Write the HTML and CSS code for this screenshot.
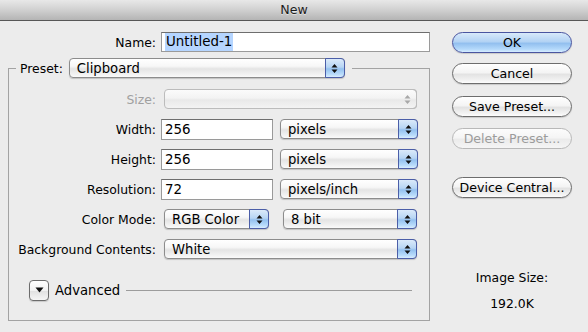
FILE: index.html
```html
<!DOCTYPE html>
<html>
<head>
    <meta charset="utf-8">
    <title>New</title>
    <link rel="stylesheet" href="styles.css">
</head>
<body>
<div class="dialog">

    <div class="titlebar">New</div>

    <div class="dialog-body">

        <div class="form-column">

            <div class="name-row">
                <label class="name-label" for="nameInput">Name:</label>
                <div class="text-field name-field" id="nameInput"><span class="selected-text">Untitled-1</span></div>
            </div>

            <fieldset class="preset-box">
                <legend class="preset-legend">
                    <span class="preset-label">Preset:</span>
                    <div class="popup preset-popup">
                        <span class="popup-text">Clipboard</span>
                        <span class="popup-arrows"><svg width="7" height="11" viewBox="0 0 7 11"><path d="M3.5 1L6.5 4.5H0.5z M0.5 6.5H6.5L3.5 10z"/></svg></span>
                    </div>
                </legend>

                <div class="row">
                    <span class="label label-disabled">Size:</span>
                    <div class="popup popup-disabled size-popup">
                        <span class="popup-text"></span>
                        <span class="popup-arrows"><svg width="7" height="11" viewBox="0 0 7 11"><path d="M3.5 1L6.5 4.5H0.5z M0.5 6.5H6.5L3.5 10z"/></svg></span>
                    </div>
                </div>

                <div class="row">
                    <span class="label">Width:</span>
                    <div class="text-field number-field">256</div>
                    <div class="popup unit-popup">
                        <span class="popup-text">pixels</span>
                        <span class="popup-arrows"><svg width="7" height="11" viewBox="0 0 7 11"><path d="M3.5 1L6.5 4.5H0.5z M0.5 6.5H6.5L3.5 10z"/></svg></span>
                    </div>
                </div>

                <div class="row">
                    <span class="label">Height:</span>
                    <div class="text-field number-field">256</div>
                    <div class="popup unit-popup">
                        <span class="popup-text">pixels</span>
                        <span class="popup-arrows"><svg width="7" height="11" viewBox="0 0 7 11"><path d="M3.5 1L6.5 4.5H0.5z M0.5 6.5H6.5L3.5 10z"/></svg></span>
                    </div>
                </div>

                <div class="row">
                    <span class="label">Resolution:</span>
                    <div class="text-field number-field">72</div>
                    <div class="popup unit-popup">
                        <span class="popup-text">pixels/inch</span>
                        <span class="popup-arrows"><svg width="7" height="11" viewBox="0 0 7 11"><path d="M3.5 1L6.5 4.5H0.5z M0.5 6.5H6.5L3.5 10z"/></svg></span>
                    </div>
                </div>

                <div class="row">
                    <span class="label">Color Mode:</span>
                    <div class="popup mode-popup">
                        <span class="popup-text">RGB Color</span>
                        <span class="popup-arrows"><svg width="7" height="11" viewBox="0 0 7 11"><path d="M3.5 1L6.5 4.5H0.5z M0.5 6.5H6.5L3.5 10z"/></svg></span>
                    </div>
                    <div class="popup bits-popup">
                        <span class="popup-text">8 bit</span>
                        <span class="popup-arrows"><svg width="7" height="11" viewBox="0 0 7 11"><path d="M3.5 1L6.5 4.5H0.5z M0.5 6.5H6.5L3.5 10z"/></svg></span>
                    </div>
                </div>

                <div class="row">
                    <span class="label">Background Contents:</span>
                    <div class="popup wide-popup">
                        <span class="popup-text">White</span>
                        <span class="popup-arrows"><svg width="7" height="11" viewBox="0 0 7 11"><path d="M3.5 1L6.5 4.5H0.5z M0.5 6.5H6.5L3.5 10z"/></svg></span>
                    </div>
                </div>

                <div class="advanced-row">
                    <span class="disclosure"><svg width="9" height="6" viewBox="0 0 9 6"><path d="M0.5 0.5H8.5L4.5 5.5z"/></svg></span>
                    <span class="advanced-label">Advanced</span>
                    <span class="advanced-line"></span>
                </div>
            </fieldset>

        </div>

        <div class="button-column">
            <button class="push-button default-button">OK</button>
            <button class="push-button cancel-button">Cancel</button>
            <button class="push-button save-button">Save Preset...</button>
            <button class="push-button delete-button" disabled>Delete Preset...</button>
            <button class="push-button device-button">Device Central...</button>

            <div class="image-size-title">Image Size:</div>
            <div class="image-size-value">192.0K</div>
        </div>

    </div>

</div>
</body>
</html>
```

FILE: styles.css
```css
* {
    box-sizing: border-box;
}

body {
    margin: 0;
    background: #ececec;
    font-family: "DejaVu Sans", Verdana, sans-serif;
    font-size: 12.4px;
    color: #000;
}

.dialog {
    width: 588px;
    height: 332px;
    overflow: hidden;
    background: #ececec;
}

.titlebar {
    height: 21px;
    line-height: 20px;
    text-align: center;
    font-size: 12.6px;
    color: #1c1c1c;
    text-shadow: 0 1px 0 rgba(255, 255, 255, 0.5);
    background: linear-gradient(#e8e8e8, #d0d0d0 50%, #b4b4b4);
    border-bottom: 1px solid #575757;
}

.dialog-body {
    display: flex;
}

/* left side */

.form-column {
    width: 430px;
    padding-left: 8px;
}

.name-row {
    display: flex;
    align-items: center;
    margin-top: 11px;
    height: 20px;
}

.name-label {
    width: 148px;
    text-align: right;
    margin-right: 5px;
}

.text-field {
    height: 21px;
    background: #fff;
    border: 1px solid #9a9a9a;
    border-top-color: #6e6e6e;
    padding-left: 3px;
    line-height: 19px;
    font-size: 13.4px;
}

.name-field {
    width: 269px;
    height: 20px;
    line-height: 18px;
    padding-top: 0;
}

.selected-text {
    display: inline-block;
    background: #b5d5ff;
    padding: 0 1px;
    height: 18px;
}

.preset-box {
    width: 422px;
    margin: 6px 0 0 0;
    padding: 10px 7px 19px 7px;
    border: 1px solid #a3a3a3;
}

.preset-legend {
    display: flex;
    align-items: center;
    padding: 0 7px 0 4px;
}

.preset-label {
    margin-right: 6px;
}

.preset-popup {
    width: 276px;
}

.row {
    display: flex;
    align-items: center;
    height: 22px;
}

.row + .row {
    margin-top: 8px;
}

.label {
    width: 140px;
    text-align: right;
    margin-right: 5px;
    flex: none;
}

.label-disabled {
    color: #a0a0a0;
}

.number-field {
    width: 112px;
}

/* pop-up menus */

.popup {
    display: flex;
    height: 20px;
    border: 1px solid #8c8c8c;
    border-radius: 4px;
    background: linear-gradient(#ffffff, #f7f7f7 40%, #e4e4e4 55%, #f2f2f2 85%, #fafafa);
    box-shadow: 0 1px 1px rgba(0, 0, 0, 0.18);
    flex: none;
}

.popup-text {
    flex: 1;
    padding-left: 7px;
    line-height: 19px;
    font-size: 13.2px;
    white-space: nowrap;
}

.popup-arrows {
    width: 20px;
    margin: -1px -1px -1px 0;
    border: 1px solid #4b5ea8;
    border-radius: 0 4px 4px 0;
    background: linear-gradient(#dbeafa, #b7d5f4 45%, #94c1ef 55%, #b9dcfb 85%, #d9edff);
    display: flex;
    align-items: center;
    justify-content: center;
}

.popup-arrows svg {
    fill: #111;
}

.popup-disabled {
    border-color: #bcbcbc;
    background: linear-gradient(#fbfbfb, #f3f3f3 45%, #e9e9e9 55%, #f3f3f3);
    box-shadow: none;
}

.popup-disabled .popup-arrows {
    border-color: #bcbcbc;
    border-left-color: transparent;
    background: transparent;
}

.popup-disabled .popup-arrows svg {
    fill: #a8a8a8;
}

.size-popup,
.wide-popup {
    width: 253px;
    margin-left: 3px;
}

.unit-popup {
    width: 138px;
    margin-left: 7px;
}

.mode-popup {
    width: 105px;
    margin-left: 3px;
}

.bits-popup {
    width: 134px;
    margin-left: 14px;
}

/* advanced disclosure */

.advanced-row {
    display: flex;
    align-items: center;
    height: 22px;
    margin-top: 19px;
}

.disclosure {
    width: 20px;
    height: 21px;
    margin-left: 13px;
    border: 1px solid #6c6c6c;
    border-radius: 4px;
    background: linear-gradient(#ffffff, #f2f2f2 50%, #e2e2e2 55%, #f5f5f5);
    box-shadow: 0 1px 1px rgba(0, 0, 0, 0.15);
    display: flex;
    align-items: center;
    justify-content: center;
}

.disclosure svg {
    fill: #111;
}

.advanced-label {
    margin-left: 6px;
    font-size: 13.2px;
}

.advanced-line {
    flex: 1;
    height: 1px;
    margin: 0 10px 0 6px;
    background: #9c9c9c;
}

/* right side */

.button-column {
    width: 120px;
    margin-left: 22px;
    padding-top: 11px;
    display: flex;
    flex-direction: column;
    align-items: center;
}

.push-button {
    width: 120px;
    height: 21px;
    padding: 0;
    border: 1px solid #6d6d6d;
    border-radius: 11px;
    font-family: "DejaVu Sans", Verdana, sans-serif;
    font-size: 12.6px;
    color: #000;
    background: linear-gradient(#ffffff, #f4f4f4 45%, #e3e3e3 55%, #f2f2f2 85%, #fdfdfd);
    box-shadow: 0 1px 1px rgba(0, 0, 0, 0.15);
}

.default-button {
    border-color: #4a55a0;
    background: linear-gradient(#d8e9fa, #b3d3f4 45%, #93c0ef 55%, #b4d9fb 85%, #d6ecff);
}

.cancel-button {
    margin-top: 10px;
}

.save-button {
    margin-top: 12px;
}

.delete-button {
    margin-top: 11px;
    color: #9c9c9c;
    border-color: #b8b8b8;
    background: linear-gradient(#fcfcfc, #f5f5f5 45%, #ebebeb 55%, #f5f5f5);
    box-shadow: none;
}

.device-button {
    margin-top: 28px;
}

.image-size-title {
    margin-top: 72px;
    line-height: 16px;
}

.image-size-value {
    margin-top: 10px;
    line-height: 16px;
}
```
